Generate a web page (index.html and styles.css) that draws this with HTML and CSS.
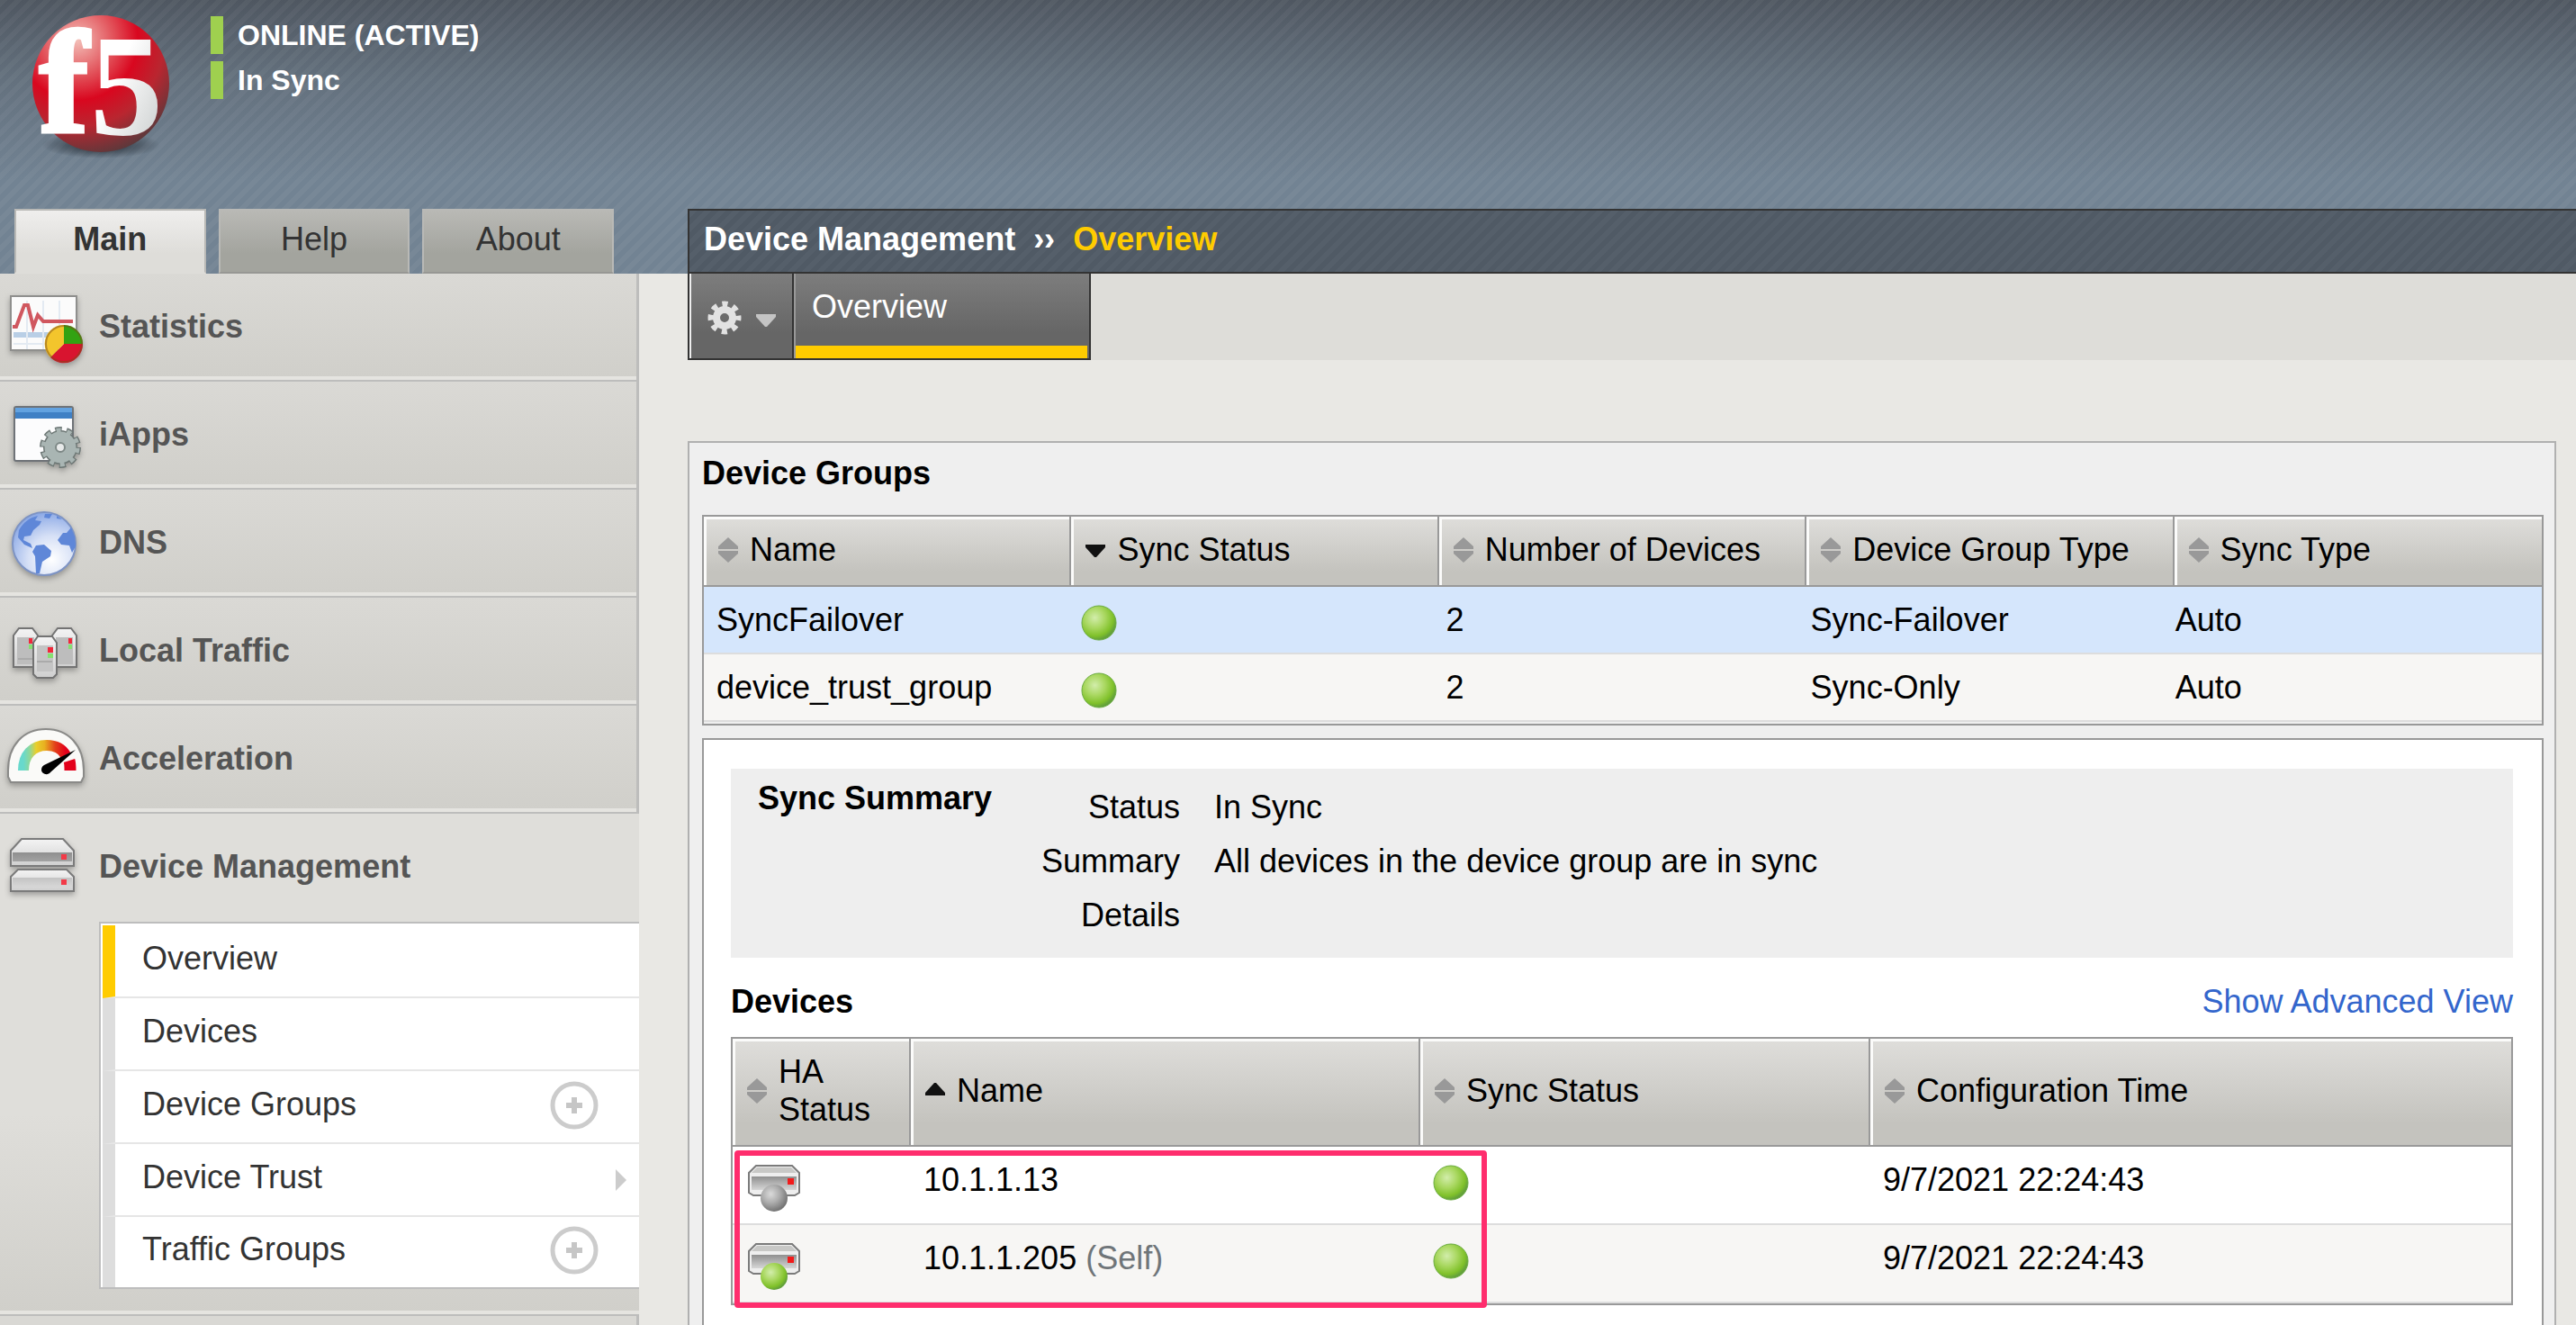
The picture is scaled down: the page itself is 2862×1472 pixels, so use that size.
FILE: index.html
```html
<!DOCTYPE html>
<html lang="en">
<head>
<meta charset="utf-8">
<title>Device Management - Overview</title>
<link rel="stylesheet" href="styles.css">
</head>
<body>
<svg class="defs" aria-hidden="true">
  <defs>
    <radialGradient id="green" cx="38%" cy="35%" r="65%">
      <stop offset="0" stop-color="#d2edab"/><stop offset=".45" stop-color="#aad862"/><stop offset=".82" stop-color="#80c12a"/><stop offset="1" stop-color="#62a03a"/>
    </radialGradient>
    <radialGradient id="gray" cx="38%" cy="35%" r="65%">
      <stop offset="0" stop-color="#dadada"/><stop offset=".5" stop-color="#aeaeae"/><stop offset="1" stop-color="#757575"/>
    </radialGradient>
    <linearGradient id="metal" x1="0" y1="0" x2="0" y2="1">
      <stop offset="0" stop-color="#8f8f8f"/><stop offset="1" stop-color="#d6d6d6"/>
    </linearGradient>
    <linearGradient id="lid" x1="0" y1="0" x2="0" y2="1">
      <stop offset="0" stop-color="#f4f4f4"/><stop offset="1" stop-color="#cfcfcf"/>
    </linearGradient>
    <symbol id="dot" viewBox="0 0 40 40"><circle cx="20" cy="20" r="19" fill="url(#green)" stroke="#6aab40" stroke-width="1"/></symbol>
    <symbol id="both" viewBox="0 0 22 28"><path d="M11 0 22 10v3H0v-3zM0 15h22v3L11 28 0 18z" fill="#999"/></symbol>
    <symbol id="down" viewBox="0 0 22 28"><path d="M0 8h22v3L12 22h-2L0 11z" fill="#111"/></symbol>
    <symbol id="up" viewBox="0 0 22 28"><path d="M10 5h2l10 11v3H0v-3z" fill="#111"/></symbol>
    <symbol id="server" viewBox="0 0 64 54">
      <path d="M12 1h40l8 8v22l-5 3H9l-5-3V9z" fill="#eee" stroke="#7b7b7b" stroke-width="2"/>
      <path d="M13 3h38l6 6H7z" fill="#c8c8c6"/>
      <path d="M7 13h50v15H7z" fill="url(#metal)"/>
      <path d="M47 15h7v7h-7z" fill="#f21a1a"/>
    </symbol>
    <symbol id="plus" viewBox="0 0 54 54"><circle cx="27" cy="27" r="24" fill="#fff" stroke="#ccc" stroke-width="5"/><path d="M18 27h18M27 18v18" stroke="#c6c6c6" stroke-width="6"/></symbol>
  </defs>
</svg>

<div class="page">
  <header class="top">
    <svg class="logo" viewBox="32 14 160 164" role="img" aria-label="f5">
      <defs>
        <radialGradient id="ball" cx="33%" cy="18%" r="88%">
          <stop offset="0" stop-color="#f3bfb8"/><stop offset=".3" stop-color="#e2525a"/><stop offset=".5" stop-color="#d9071f"/><stop offset=".72" stop-color="#b92630"/><stop offset="1" stop-color="#553a3c"/>
        </radialGradient>
        <radialGradient id="shade"><stop offset="0" stop-color="#1d242c"/><stop offset="1" stop-color="#1d242c" stop-opacity="0"/></radialGradient>
        <linearGradient id="letters" x1="0" y1="0" x2="1" y2="1"><stop offset=".4" stop-color="#fff"/><stop offset="1" stop-color="#c2c6c6"/></linearGradient>
      </defs>
      <ellipse cx="112" cy="161" rx="66" ry="15" fill="url(#shade)"/>
      <circle cx="112" cy="93" r="76" fill="url(#ball)"/>
      <g class="logo-text">
        <text x="44" y="146" fill="#fff" stroke="#fff" stroke-width="5">f</text>
        <text x="100" y="149" fill="url(#letters)">5</text>
      </g>
    </svg>
    <div class="states">
      <div class="state">ONLINE (ACTIVE)</div>
      <div class="state">In Sync</div>
    </div>
  </header>

  <div class="side">
    <nav class="tabs" aria-label="Sections">
      <a class="tab tab-on" href="#main">Main</a>
      <a class="tab" href="#help">Help</a>
      <a class="tab" href="#about">About</a>
    </nav>
    <ul class="menu">
      <li class="item"><a class="entry" href="#statistics">
        <svg class="icon" viewBox="0 0 100 120" aria-hidden="true">
          <path d="M12 25h73v60H12z" fill="#fbfbfb" stroke="#8f8f8d" stroke-width="2"/>
          <path d="M15 68h67" stroke="#b9cfe6" stroke-width="6"/>
          <path d="M15 78h67M30 30v54M48 30v54M66 30v54" stroke="#e3eaf2" stroke-width="2"/>
          <path d="M14 59h4l9-24h4l6 24 5-13 6 7h33" fill="none" stroke="#d0575f" stroke-width="4"/>
          <path d="M71 78V57a21 21 0 0 1 21 21z" fill="#33a212"/>
          <path d="M71 78h21a21 21 0 0 1-36 15z" fill="#d8142f"/>
          <path d="M71 78 56 93a21 21 0 0 1 15-36z" fill="#f3c52c"/>
          <circle cx="71" cy="78" r="20" fill="none" stroke="#7c4a18" stroke-opacity=".5" stroke-width="2"/>
        </svg>Statistics</a></li>
      <li class="item"><a class="entry" href="#iapps">
        <svg class="icon" viewBox="0 0 100 120" aria-hidden="true">
          <rect x="16" y="28" width="65" height="60" rx="2" fill="#fcfcfd" stroke="#6f7378" stroke-width="2"/>
          <path d="M17 29h63v12H17z" fill="#3f80c5"/><path d="M17 29h63v5H17z" fill="#62a2e0"/>
          <circle cx="67" cy="73" r="19" fill="none" stroke="#6d7775" stroke-width="8" stroke-dasharray="7 4.94"/>
          <circle cx="67" cy="73" r="12" fill="none" stroke="#6d7775" stroke-width="14"/>
          <circle cx="67" cy="73" r="19" fill="none" stroke="#a9b5b3" stroke-width="5" stroke-dasharray="5 6.94" stroke-dashoffset="-1"/>
          <circle cx="67" cy="73" r="11" fill="none" stroke="#a9b5b3" stroke-width="13"/>
          <circle cx="67" cy="73" r="5" fill="#e8eaea" stroke="#7d8886" stroke-width="2"/>
        </svg>iApps</a></li>
      <li class="item"><a class="entry" href="#dns">
        <svg class="icon" viewBox="0 0 100 120" aria-hidden="true">
          <defs><radialGradient id="sea" cx="62%" cy="75%" r="75%"><stop offset="0" stop-color="#fff"/><stop offset=".5" stop-color="#d6e0f6"/><stop offset="1" stop-color="#8daae6"/></radialGradient></defs>
          <circle cx="49" cy="60" r="35" fill="url(#sea)" stroke="#7d93c4" stroke-width="2"/>
          <path d="M21 45c5-9 12-14 21-16l-3 5 7 1-2 4-7 6-3 6-7 1-1 4 8 4 2 5-9-4-7-8zM50 27l8 0-3 5-6-1zM63 29l6 4-6-1zM40 62l9-1 8 7-1 6-9 6-3 13-4 0-1-19-3-5zM79 42l4 10 1 11-4 7-3-8-9-1-4-5 6-8 4 0z" fill="#5f87d8"/>
        </svg>DNS</a></li>
      <li class="item"><a class="entry" href="#local-traffic">
        <svg class="icon" viewBox="0 0 100 120" aria-hidden="true">
          <g fill="url(#lid)" stroke="#737373" stroke-width="2">
            <path d="M15 77V42l6-8h15l6 8v35z"/><path d="M58 77V42l6-8h15l6 8v35z"/>
          </g>
          <path d="M19 44h19v30H19zM62 44h19v30H62z" fill="#bdbdbd"/>
          <path d="M32 45h4v6h-4zM76 45h4v6h-4z" fill="#f0283a"/><path d="M32 52h4v5h-4zM76 52h4v5h-4z" fill="#86e070"/>
          <path d="M37 85V50l5-7h16l5 7v35l-4 4H41z" fill="url(#lid)" stroke="#737373" stroke-width="2"/>
          <path d="M41 53h18v29H41z" fill="#c4c4c4"/>
          <path d="M53 55h6v6h-6z" fill="#f0283a"/><path d="M53 62h6v5h-6z" fill="#86e070"/>
          <path d="M41 71h17M20 68h16" stroke="#aaa" stroke-width="2"/>
        </svg>Local Traffic</a></li>
      <li class="item"><a class="entry" href="#acceleration">
        <svg class="icon" viewBox="0 0 100 120" aria-hidden="true">
          <defs><linearGradient id="heat"><stop offset="0" stop-color="#68d9cc"/><stop offset=".15" stop-color="#8fd79a"/><stop offset=".3" stop-color="#e8cf2c"/><stop offset=".5" stop-color="#e8b020"/><stop offset=".75" stop-color="#e2401a"/><stop offset="1" stop-color="#e3001a"/></linearGradient></defs>
          <path d="M9 72C9 44 26 26 51 26s42 18 42 46v7l-3 6H12l-3-6z" fill="#fafaf8" stroke="#8a8a88" stroke-width="2"/>
          <path d="M26 72c0-17 10-28 26-28 10 0 17 4 21 11" fill="none" stroke="url(#heat)" stroke-width="12"/>
          <path d="M77 61c1 3 1 6 1 11" fill="none" stroke="#e3001a" stroke-width="13"/>
          <path d="M84 49 56 74c-3 4-10 2-10-3 0-3 2-5 5-6z" fill="#000"/>
        </svg>Acceleration</a></li>
      <li class="item item-open"><a class="entry" href="#device-management">
        <svg class="icon" viewBox="0 0 100 120" aria-hidden="true">
          <g stroke="#7b7b7b" stroke-width="2">
            <path d="M12 86V70l8-8h54l8 8v16z" fill="url(#lid)"/>
            <path d="M12 58V41l12-13h46l12 13v17z" fill="url(#lid)"/>
          </g>
          <path d="M14 43h66v10H14zM14 71h66v10H14z" fill="url(#metal)"/>
          <path d="M68 45h6v6h-6zM68 73h6v6h-6z" fill="#f23a48"/>
        </svg>Device Management</a>
        <ul class="submenu">
          <li class="sub sub-on"><a class="sub-link" href="#overview">Overview</a></li>
          <li class="sub"><a class="sub-link" href="#devices">Devices</a></li>
          <li class="sub"><a class="sub-link" href="#device-groups">Device Groups</a><button class="add" type="button" aria-label="Create device group"><svg class="plus" aria-hidden="true"><use href="#plus"/></svg></button></li>
          <li class="sub"><a class="sub-link" href="#device-trust">Device Trust</a><svg class="arrow" viewBox="0 0 12 24" aria-hidden="true"><path d="M0 0 12 12 0 24z" fill="#ccc"/></svg></li>
          <li class="sub"><a class="sub-link" href="#traffic-groups">Traffic Groups</a><button class="add" type="button" aria-label="Create traffic group"><svg class="plus" aria-hidden="true"><use href="#plus"/></svg></button></li>
        </ul>
      </li>
    </ul>
  </div>

  <main class="content">
    <div class="crumbs">Device Management&nbsp; ››&nbsp; <span class="crumb-now">Overview</span></div>
    <div class="bar">
      <button class="gear" type="button" aria-label="Options">
        <svg class="gear-icon" viewBox="0 0 78 42" aria-hidden="true">
          <circle cx="21" cy="21" r="15" fill="none" stroke="#e2e2e2" stroke-width="7" stroke-dasharray="6 5.78" stroke-dashoffset="3"/>
          <circle cx="21" cy="21" r="9" fill="none" stroke="#e2e2e2" stroke-width="8"/>
          <path d="M56 17h22v3L68 31h-2L56 20z" fill="#c4c4c4"/>
        </svg>
      </button>
      <a class="bar-tab" href="#overview">Overview</a>
    </div>

    <section class="panel">
      <h2 class="heading">Device Groups</h2>
      <table class="grid groups">
        <thead><tr>
          <th><div class="head"><svg class="sort" aria-hidden="true"><use href="#both"/></svg>Name</div></th>
          <th><div class="head"><svg class="sort" aria-hidden="true"><use href="#down"/></svg>Sync Status</div></th>
          <th><div class="head"><svg class="sort" aria-hidden="true"><use href="#both"/></svg>Number of Devices</div></th>
          <th><div class="head"><svg class="sort" aria-hidden="true"><use href="#both"/></svg>Device Group Type</div></th>
          <th><div class="head"><svg class="sort" aria-hidden="true"><use href="#both"/></svg>Sync Type</div></th>
        </tr></thead>
        <tbody>
          <tr class="picked"><td>SyncFailover</td><td><svg class="dot" role="img" aria-label="In sync"><use href="#dot"/></svg></td><td>2</td><td>Sync-Failover</td><td>Auto</td></tr>
          <tr><td>device_trust_group</td><td><svg class="dot" role="img" aria-label="In sync"><use href="#dot"/></svg></td><td>2</td><td>Sync-Only</td><td>Auto</td></tr>
        </tbody>
      </table>

      <div class="detail">
        <div class="summary">
          <h3 class="summary-title">Sync Summary</h3>
          <dl class="facts">
            <dt>Status</dt><dd>In Sync</dd>
            <dt>Summary</dt><dd>All devices in the device group are in sync</dd>
            <dt>Details</dt><dd></dd>
          </dl>
        </div>
        <div class="devices-top">
          <h3 class="devices-title">Devices</h3>
          <a class="link" href="#advanced">Show Advanced View</a>
        </div>
        <div class="marked">
          <table class="grid devices">
            <thead><tr>
              <th><div class="head"><svg class="sort" aria-hidden="true"><use href="#both"/></svg>HA Status</div></th>
              <th><div class="head"><svg class="sort" aria-hidden="true"><use href="#up"/></svg>Name</div></th>
              <th><div class="head"><svg class="sort" aria-hidden="true"><use href="#both"/></svg>Sync Status</div></th>
              <th><div class="head"><svg class="sort" aria-hidden="true"><use href="#both"/></svg>Configuration Time</div></th>
            </tr></thead>
            <tbody>
              <tr><td><svg class="server" viewBox="0 0 64 54" role="img" aria-label="Standby"><use href="#server"/><circle cx="32" cy="37" r="15" fill="url(#gray)"/></svg></td><td>10.1.1.13</td><td><svg class="dot" role="img" aria-label="In sync"><use href="#dot"/></svg></td><td>9/7/2021 22:24:43</td></tr>
              <tr><td><svg class="server" viewBox="0 0 64 54" role="img" aria-label="Active"><use href="#server"/><circle cx="32" cy="37" r="15" fill="url(#green)"/></svg></td><td>10.1.1.205 <span class="self">(Self)</span></td><td><svg class="dot" role="img" aria-label="In sync"><use href="#dot"/></svg></td><td>9/7/2021 22:24:43</td></tr>
            </tbody>
          </table>
          <div class="marker"></div>
        </div>
      </div>
    </section>
  </main>
</div>
</body>
</html>
```

FILE: styles.css
```css
* { box-sizing: border-box; }
body {
  margin: 0;
  background: #e9e8e4;
  color: #000;
  font: 36px/40px "Liberation Sans", Arial, sans-serif;
}
a { color: inherit; text-decoration: none; }
ul, dl, dd, h2, h3 { margin: 0; padding: 0; }
ul { list-style: none; }
h2, h3 { font-size: 36px; font-weight: bold; }
svg { display: block; flex: none; }
.defs { position: absolute; width: 0; height: 0; }
button { margin: 0; padding: 0; border: 0; background: none; cursor: pointer; }

.page {
  display: grid;
  grid-template-columns: 710px 1fr;
  grid-template-rows: 232px 1fr;
  column-gap: 54px;
  min-height: 100vh;
  background:
    linear-gradient(135deg, rgba(255,255,255,.04) 25%, transparent 25% 50%, rgba(255,255,255,.04) 50% 75%, transparent 75%) 0 0 / 16px 16px,
    linear-gradient(#4f5761, #64717e 90px, #728393 200px, #728393);
}

/* header */
.top { grid-column: 1 / -1; display: flex; gap: 42px; padding: 14px 0 0 32px; }
.logo { width: 160px; height: 164px; overflow: visible; }
.logo-text { font: bold 162px "Liberation Serif", serif; }
.states { display: flex; flex-direction: column; gap: 8px; padding-top: 4px; }
.state {
  border-left: 14px solid #9fd04f;
  padding-left: 16px;
  color: #fff;
  font-size: 32px;
  font-weight: bold;
  line-height: 42px;
}

/* sidebar */
.side { display: flex; flex-direction: column; }
.tabs { display: flex; gap: 14px; padding: 0 28px 0 16px; }
.tab {
  flex: 1;
  border: 2px solid #b9b9b6;
  border-bottom-color: #979794;
  background: linear-gradient(#b9b9b5, #a3a49e 70%);
  color: #333;
  line-height: 64px;
  padding-bottom: 4px;
  text-align: center;
}
.tab-on {
  border-bottom-color: #deddd9;
  background: linear-gradient(#efeeed, #deddd9 70%);
  font-weight: bold;
}
.menu { flex: 1; display: flex; flex-direction: column; background: #e9e8e4; }
.menu::after { content: ""; flex: 1; background: #d9d8d4; border-right: 3px solid #bdbdbc; }
.item {
  border-right: 3px solid #bdbdbc;
  border-bottom: 2px solid #bdbdbc;
  background: linear-gradient(#dad9d5, #d0cfca);
  box-shadow: inset 0 -4px 0 #e5e4e0;
}
.entry { display: flex; align-items: center; gap: 10px; color: #555; font-weight: bold; }
.icon { width: 100px; height: 120px; margin-bottom: -2px; filter: drop-shadow(0 3px 3px rgba(0,0,0,.3)); }
.item-open {
  border-right: 0;
  padding-bottom: 28px;
  background: linear-gradient(#dfdeda 60%, #d0cfca);
}
.submenu { margin: 2px 0 0 110px; border: 2px solid #bdbdbd; border-right: 0; padding: 2px 0 0 2px; background: #fff; }
.sub {
  display: flex;
  align-items: center;
  min-height: 81px;
  border-left: 14px solid #ddd;
  border-bottom: 2px solid #e6e6e6;
  padding: 0 14px 0 30px;
  color: #333;
}
.sub:last-child { min-height: 78px; border-bottom: 0; }
.sub-on { border-left-color: #fc0; }
.sub-link { flex: 1; padding-bottom: 6px; }
.add { margin: 0 31px 4px 0; }
.plus { width: 54px; height: 54px; }
.arrow { width: 12px; height: 24px; }

/* breadcrumb and page tabs */
.content {
  display: flex;
  flex-direction: column;
  min-width: 0;
  background: linear-gradient(transparent 72px, #e9e8e4 72px);
  box-shadow: -54px 72px 0 #e9e8e4;
  clip-path: inset(0 0 0 -54px);
}
.crumbs {
  border: 2px solid #333;
  border-right: 0;
  padding: 12px 16px 16px;
  background:
    linear-gradient(135deg, rgba(255,255,255,.03) 25%, transparent 25% 50%, rgba(255,255,255,.03) 50% 75%, transparent 75%) 0 0 / 16px 16px,
    #505a65;
  color: #fff;
  font-weight: bold;
}
.crumb-now { color: #fc0; }
.bar { display: flex; margin-bottom: 90px; border-left: 2px solid #333; background: #deddd9; }
.gear {
  width: 116px;
  border: solid #333;
  border-width: 0 2px 2px 0;
  box-shadow: inset 2px 0 0 #eee;
  background: linear-gradient(#7d7d7d, #666 70%);
}
.gear-icon { width: 78px; height: 42px; margin: 4px 0 0 18px; }
.bar-tab {
  width: 330px;
  border: solid #333;
  border-width: 0 2px 2px 0;
  padding: 10px 20px 30px;
  background:
    linear-gradient(#fc0, #fc0) 2px 100% / calc(100% - 4px) 14px no-repeat,
    linear-gradient(#7d7d7d, #666 70%);
  box-shadow: inset 2px 0 0 #999;
  color: #fff;
  line-height: 54px;
}

/* main panel */
.panel {
  flex: 1;
  display: flex;
  flex-direction: column;
  margin-right: 22px;
  border: 2px solid #b0b0b0;
  border-bottom: 0;
  padding: 12px 12px 0 14px;
  background: #efefef;
}
.heading { padding: 2px 0 26px; }

.grid { display: block; border: 2px solid #999; border-spacing: 0; }
.grid thead, .grid tbody { display: block; }
.grid tr { display: grid; }
.grid thead tr { border-bottom: 2px solid #999; }
.grid th {
  display: flex;
  align-items: center;
  border-right: 2px solid #999;
  padding: 0 12px 2px 16px;
  background: linear-gradient(#dfdedb, #c4c3be 80%);
  box-shadow: inset 3px 3px 0 #fbfbfa;
  font-weight: normal;
  text-align: left;
  line-height: 42px;
}
.grid th:last-child { border-right: 0; }
.grid td { padding: 0 0 0 14px; }
.grid tbody tr { border-bottom: 2px solid #ddd; background: #fff; }
.grid tbody tr:nth-child(even) { background: #f7f6f4; }
.grid tbody tr.picked { background: #d5e6fc; }
.head { display: flex; align-items: center; gap: 13px; }
.sort { width: 22px; height: 28px; }
.dot { width: 40px; height: 40px; }

.groups { padding-bottom: 2px; margin-bottom: 14px; }
.groups tr { grid-template-columns: repeat(5, 1fr); }
.groups th { min-height: 76px; }
.groups tbody tr { padding-right: 16px; }
.groups td { padding-top: 17px; padding-bottom: 16px; }
.groups .dot { margin-top: 3px; margin-bottom: -3px; }

.detail { flex: 1; border: 2px solid #999; border-bottom: 0; padding: 32px 32px 0 30px; background: #fff; }
.summary { display: flex; padding: 13px 30px 17px; background: #eee; }
.summary-title { width: 280px; }
.facts { display: grid; grid-template-columns: 189px 1fr; column-gap: 38px; line-height: 60px; }
.facts dt { text-align: right; }
.devices-top { display: flex; justify-content: space-between; padding: 29px 0 19px; }
.link { color: #36c; }

.marked { position: relative; }
.devices tr { grid-template-columns: 198px 566px 500px 1fr; }
.devices th { min-height: 118px; }
.devices td { padding-top: 17px; padding-bottom: 28px; }
.devices .dot, .server { margin-top: 3px; margin-bottom: -18px; }
.server { width: 64px; height: 54px; }
.self { color: #6f7579; }
.marker {
  position: absolute;
  left: 4px;
  top: 126px;
  width: 836px;
  height: 175px;
  border: 6px solid #ff2d6d;
  border-radius: 4px;
  pointer-events: none;
}
```
